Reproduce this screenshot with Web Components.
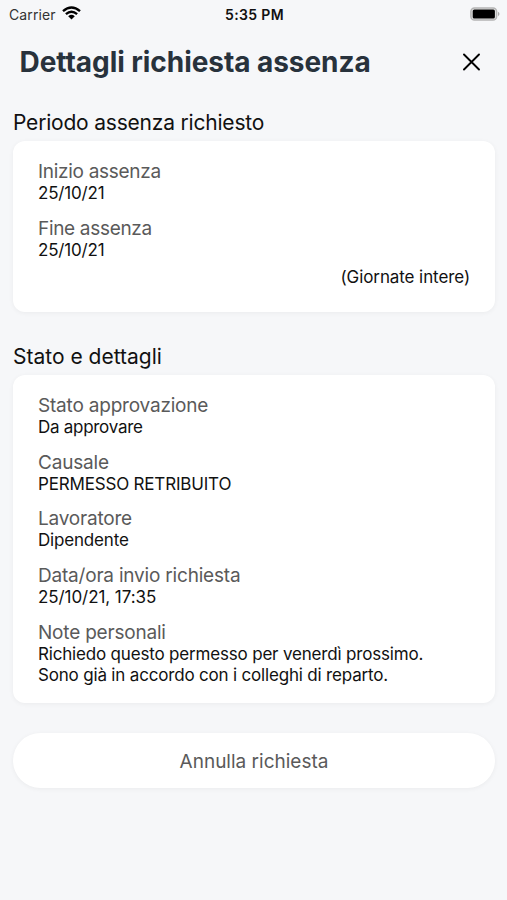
<!DOCTYPE html>
<html lang="it"><head><meta charset="utf-8"><title>Dettagli richiesta assenza</title>
<style>body{margin:0;background:#f6f7f9;font-family:Inter,"Liberation Sans",sans-serif;color:#111}</style></head>
<body><absence-page></absence-page>
<script>
const define=(name,html)=>{
  const t=document.createElement('template');t.innerHTML=html;
  customElements.define(name,class extends HTMLElement{
    constructor(){super();this.attachShadow({mode:'open'}).append(t.content.cloneNode(true));}
    static get observedAttributes(){return ['label','heading']}
    attributeChangedCallback(n,o,v){this.shadowRoot.querySelectorAll('[data-attr="'+n+'"]').forEach(e=>{e.textContent=v})}
  });
};
define('status-bar',`<style>:host{display:grid;grid-template-columns:1fr auto 1fr;align-items:center;height:28px;padding:0 7px 0 9px;box-sizing:border-box;font-size:14px}
.l{display:flex;align-items:center;gap:6px;color:#333;letter-spacing:.12px}.t{font-weight:600;letter-spacing:.35px}.b{justify-self:end}svg{display:block;margin-top:-2px}.b{margin-top:-1px}</style>
<div class="l"><span>Carrier</span><svg width="19" height="14" viewBox="0 0 19 14"><g fill="none" stroke="#000" stroke-width="2.4"><path d="M1 5.1Q9.5-2.3 18 5.1"/><path d="M3.9 8.2Q9.5 3.4 15.1 8.2"/></g><path d="M6.2 10.2Q9.5 7.4 12.8 10.2L9.5 13.6Z"/></svg></div>
<span class="t">5:35 PM</span>
<svg class="b" width="30" height="14" viewBox="0 0 30 14"><rect x=".9" y=".9" width="25.7" height="12.2" rx="3.6" fill="#e4e4e4" stroke="#b4b4b4" stroke-width="1.5"/><rect x="2.7" y="2.5" width="22.2" height="9" rx="1.6"/><path d="M28 4.8Q31 7 28 9.2Z" fill="#aaa"/></svg>`);
define('page-header',`<style>:host{display:flex;align-items:center;justify-content:space-between;height:66px;padding:1px 27px 0 19.5px;box-sizing:border-box}
h1{margin:0;font-size:28px;font-weight:700;color:#28323c;white-space:nowrap;letter-spacing:-.06px}svg{display:block;margin-top:1px}</style>
<h1><slot></slot></h1><svg width="18" height="18" viewBox="0 0 18 18"><path d="M2 1.5L17 16.5M17 1.5L2 16.5" stroke="#000" stroke-width="1.9" stroke-linecap="round"/></svg>`);
define('info-section',`<style>:host{display:block;padding:0 12px 0 13px}
h2{box-sizing:border-box;margin:0;padding-top:1px;font-size:21px;line-height:28px;font-weight:400;height:33px;letter-spacing:var(--hs,0)}
.c{box-sizing:border-box;height:var(--h);background:#fff;border-radius:12px;padding:20px 25px;box-shadow:0 1px 5px #0000000d}</style><h2><span data-attr="heading"></span></h2><div class="c"><slot></slot></div>`);
define('info-field',`<style>:host{display:block;margin-bottom:12.7px}.k{font-size:19px;line-height:22px;color:#5a5a5a;white-space:nowrap;letter-spacing:var(--ks,-.2px)}.v{font-size:17px;line-height:21px;white-space:nowrap;padding-bottom:1px;letter-spacing:var(--vs,-.18px)}</style><div class="k"><span data-attr="label"></span></div><div class="v"><slot></slot></div>`);
define('pill-button',`<style>:host{display:block;padding:30px 12px 0 13px}button{display:block;width:100%;height:55px;border:0;border-radius:28px;background:#fff;box-shadow:0 1px 5px #0000000d;font:19px Inter,sans-serif;color:#5a5a5a;padding:2px 0 0}</style><button><slot></slot></button>`);
define('absence-page',`<style>:host{display:block;min-height:900px}.p{--h:171px;--hs:-.2px;padding-top:14px}.s{--h:328px;margin-top:30px}.n{text-align:right;font-size:17px;line-height:21px;margin-top:-7px;letter-spacing:-.09px}
.a{--ks:-.29px}.b{--ks:-.32px}.d{--vs:-.28px}.e{--vs:-.07px}</style>
<status-bar></status-bar><page-header>Dettagli richiesta assenza</page-header>
<info-section class="p" heading="Periodo assenza richiesto"><info-field class="a" label="Inizio assenza">25/10/21</info-field><info-field class="b" label="Fine assenza">25/10/21</info-field><div class="n">(Giornate intere)</div></info-section>
<info-section class="s" heading="Stato e dettagli"><info-field class="d" label="Stato approvazione">Da approvare</info-field><info-field label="Causale">PERMESSO RETRIBUITO</info-field><info-field label="Lavoratore">Dipendente</info-field><info-field class="e" label="Data/ora invio richiesta">25/10/21, 17:35</info-field><info-field label="Note personali">Richiedo questo permesso per venerdì prossimo.<br>Sono già in accordo con i colleghi di reparto.</info-field></info-section>
<pill-button>Annulla richiesta</pill-button>`);
</script></body></html>
